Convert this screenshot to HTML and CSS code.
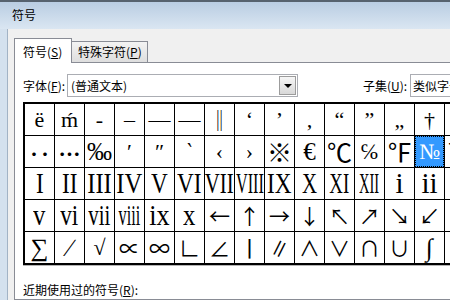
FILE: index.html
```html
<!DOCTYPE html>
<html lang="zh-CN">
<head>
  <meta charset="UTF-8" />
  <title>符号</title>
  <link rel="stylesheet" href="styles.css">
</head>
<body>

  <div class="window">
    <div class="titlebar">符号</div>
    <div class="frame">
      <div class="client">

        <div class="tabs">
          <div class="tab tab-active">符号(<u>S</u>)</div>
          <div class="tab tab-idle">特殊字符(<u>P</u>)</div>
        </div>

        <div class="page">
          <div class="font-row">
            <span class="field-label font-label">字体(<u>F</u>):</span>
            <div class="combo font-combo"><span>(普通文本)</span><span class="drop"></span></div>
            <span class="field-label subset-label">子集(<u>U</u>):</span>
            <div class="combo subset-combo">类似字母的符号</div>
          </div>

          <!-- symbol grid, 16 columns -->
          <div class="symbols">
            <div>ë</div><div>ḿ</div><div>-</div><div>–</div><div>—</div><div>―</div><div class="cjk">‖</div><div>‘</div>
            <div>’</div><div>‚</div><div>“</div><div>”</div><div>„</div><div>†</div><div>‡</div><div>•</div>

            <div class="cjk dots">‥</div><div class="cjk dots">…</div><div class="big">‰</div><div>′</div><div>″</div><div>‵</div><div>‹</div><div>›</div>
            <div class="cjk big">※</div><div class="big">€</div><div class="cjk big">℃</div><div>℅</div><div class="cjk big">℉</div><div class="sel">№</div><div>℡</div><div>™</div>

            <div class="rn"><span class="w80">I</span></div><div class="rn"><span class="w80">II</span></div>
            <div class="rn"><span class="w85">III</span></div><div class="rn"><span class="w85">IV</span></div>
            <div class="rn"><span class="w80">V</span></div><div class="rn"><span class="w80">VI</span></div>
            <div class="rn"><span class="w72">VII</span></div><div class="rn"><span class="w56">VIII</span></div>
            <div class="rn"><span class="w80">IX</span></div><div class="rn"><span class="w72">X</span></div>
            <div class="rn"><span class="w65">XI</span></div><div class="rn"><span class="w50">XII</span></div>
            <div class="rn">i</div><div class="rn">ii</div>
            <div class="rn"><span class="w72">iii</span></div><div class="rn"><span class="w85">iv</span></div>

            <div class="rn"><span class="w85">v</span></div><div class="rn"><span class="w80">vi</span></div>
            <div class="rn"><span class="w72">vii</span></div><div class="rn"><span class="w56">viii</span></div>
            <div class="rn"><span class="w90">ix</span></div><div class="rn"><span class="w85">x</span></div>
            <div class="cjk">←</div><div class="cjk">↑</div><div class="cjk">→</div><div class="cjk">↓</div>
            <div class="cjk">↖</div><div class="cjk">↗</div><div class="cjk">↘</div><div class="cjk">↙</div>
            <div class="cjk">∈</div><div class="cjk">∏</div>

            <div class="big">∑</div><div class="big">∕</div><div>√</div><div class="cjk">∝</div>
            <div class="cjk">∞</div><div class="cjk">∟</div><div class="cjk">∠</div><div class="cjk tall">∣</div>
            <div class="cjk">∥</div><div class="cjk">∧</div><div class="cjk">∨</div><div class="cjk">∩</div>
            <div class="cjk">∪</div><div class="big">∫</div><div class="cjk">∮</div><div class="cjk">∴</div>
          </div>

          <p class="recent-label">近期使用过的符号(<u>R</u>):</p>
        </div>

      </div>
    </div>
  </div>

</body>
</html>
```

FILE: styles.css
```css
* { margin: 0; padding: 0; box-sizing: border-box; }

body {
  width: 450px;
  height: 300px;
  overflow: hidden;
  font-family: "Noto Sans CJK SC", "Noto Sans", sans-serif;
  font-size: 12px;
  color: #000;
  background: #f0f0f0;
}

u { text-decoration: underline; text-underline-offset: 1px; }

.window {
  width: 560px;
  height: 300px;
  display: flex;
  flex-direction: column;
}

.titlebar {
  height: 29px;
  border-top: 2px solid #56626e;
  background: linear-gradient(#b9cde2, #dae6f2);
  padding-left: 12px;
  line-height: 26px;
}

.frame {
  flex: 1;
  display: flex;
  background: #d4e1ee;
  padding-left: 7px;
}

.client {
  flex: 1;
  display: flex;
  flex-direction: column;
  background: #f0f0f0;
  border-left: 1px solid #a2b3c5;
  padding: 9px 0 0 6px;
}

/* tabs */
.tabs {
  display: flex;
  align-items: flex-end;
  height: 25px;
  margin-bottom: -1px;
  position: relative;
}

.tab {
  border: 1px solid #898c95;
  border-bottom: none;
  white-space: nowrap;
}

.tab-active {
  width: 58px;
  height: 25px;
  padding: 2px 0 0 8px;
  line-height: 22px;
  background: #fff;
}

.tab-idle {
  width: 76px;
  height: 21px;
  margin-bottom: 1px;
  border-left: none;
  padding-left: 6px;
  line-height: 20px;
  background: linear-gradient(#f3f3f3, #dedede);
}

.page {
  flex: 1;
  background: #fff;
  border: 1px solid #898c95;
  border-right: none;
  padding: 11px 0 0 8px;
}

/* font / subset row */
.font-row {
  display: flex;
  align-items: center;
  height: 23px;
}

.field-label { white-space: nowrap; line-height: 16px; }
.font-label { width: 44px; }
.subset-label { margin-left: 65px; width: 47px; }

.combo {
  height: 23px;
  border: 1px solid #abadb3;
  background: #fff;
  display: flex;
  align-items: center;
  padding-left: 3px;
  white-space: nowrap;
}

.font-combo {
  width: 231px;
  justify-content: space-between;
  padding-right: 1px;
}

.subset-combo { width: 160px; padding-left: 2px; }

.drop {
  width: 17px;
  height: 19px;
  border: 1px solid #9c9c9c;
  background: linear-gradient(#f6f6f6, #d8d8d8);
  display: flex;
  align-items: center;
  justify-content: center;
}

.drop::after {
  content: "";
  border-left: 4px solid transparent;
  border-right: 4px solid transparent;
  border-top: 4px solid #000;
}

/* symbol grid */
.symbols {
  margin-top: 5px;
  width: max-content;
  display: grid;
  grid-template-columns: repeat(16, 29px);
  grid-auto-rows: 31px;
  gap: 1px;
  background: #000;
  border: 2px solid #000;
  border-right-width: 1px;
  box-shadow: 0 1px 0 #b4b4b4;
  font-family: "Liberation Serif", "DejaVu Serif", "Noto Sans CJK SC", serif;
  font-size: 22px;
}

.symbols div {
  background: #fff;
  display: flex;
  align-items: center;
  justify-content: center;
  overflow: hidden;
  line-height: 1;
  white-space: nowrap;
}

.symbols .cjk { font-family: "Noto Sans CJK SC", sans-serif; font-size: 21px; }
.symbols .big { font-size: 25px; }
.symbols .rn { font-size: 29px; }
.symbols .tall { font-size: 27px; }
.symbols .dots { font-weight: bold; font-size: 22px; }

.symbols .sel {
  background: #3399ff;
  color: #fff;
  outline: 1px dotted #000;
  outline-offset: -1px;
}

.symbols span { display: inline-block; }
.w90 { transform: scaleX(.9); }
.w85 { transform: scaleX(.85); }
.w80 { transform: scaleX(.8); }
.w72 { transform: scaleX(.72); }
.w65 { transform: scaleX(.65); }
.w56 { transform: scaleX(.56); }
.w50 { transform: scaleX(.5); }

.recent-label {
  margin-top: 17px;
  line-height: 16px;
}
```
